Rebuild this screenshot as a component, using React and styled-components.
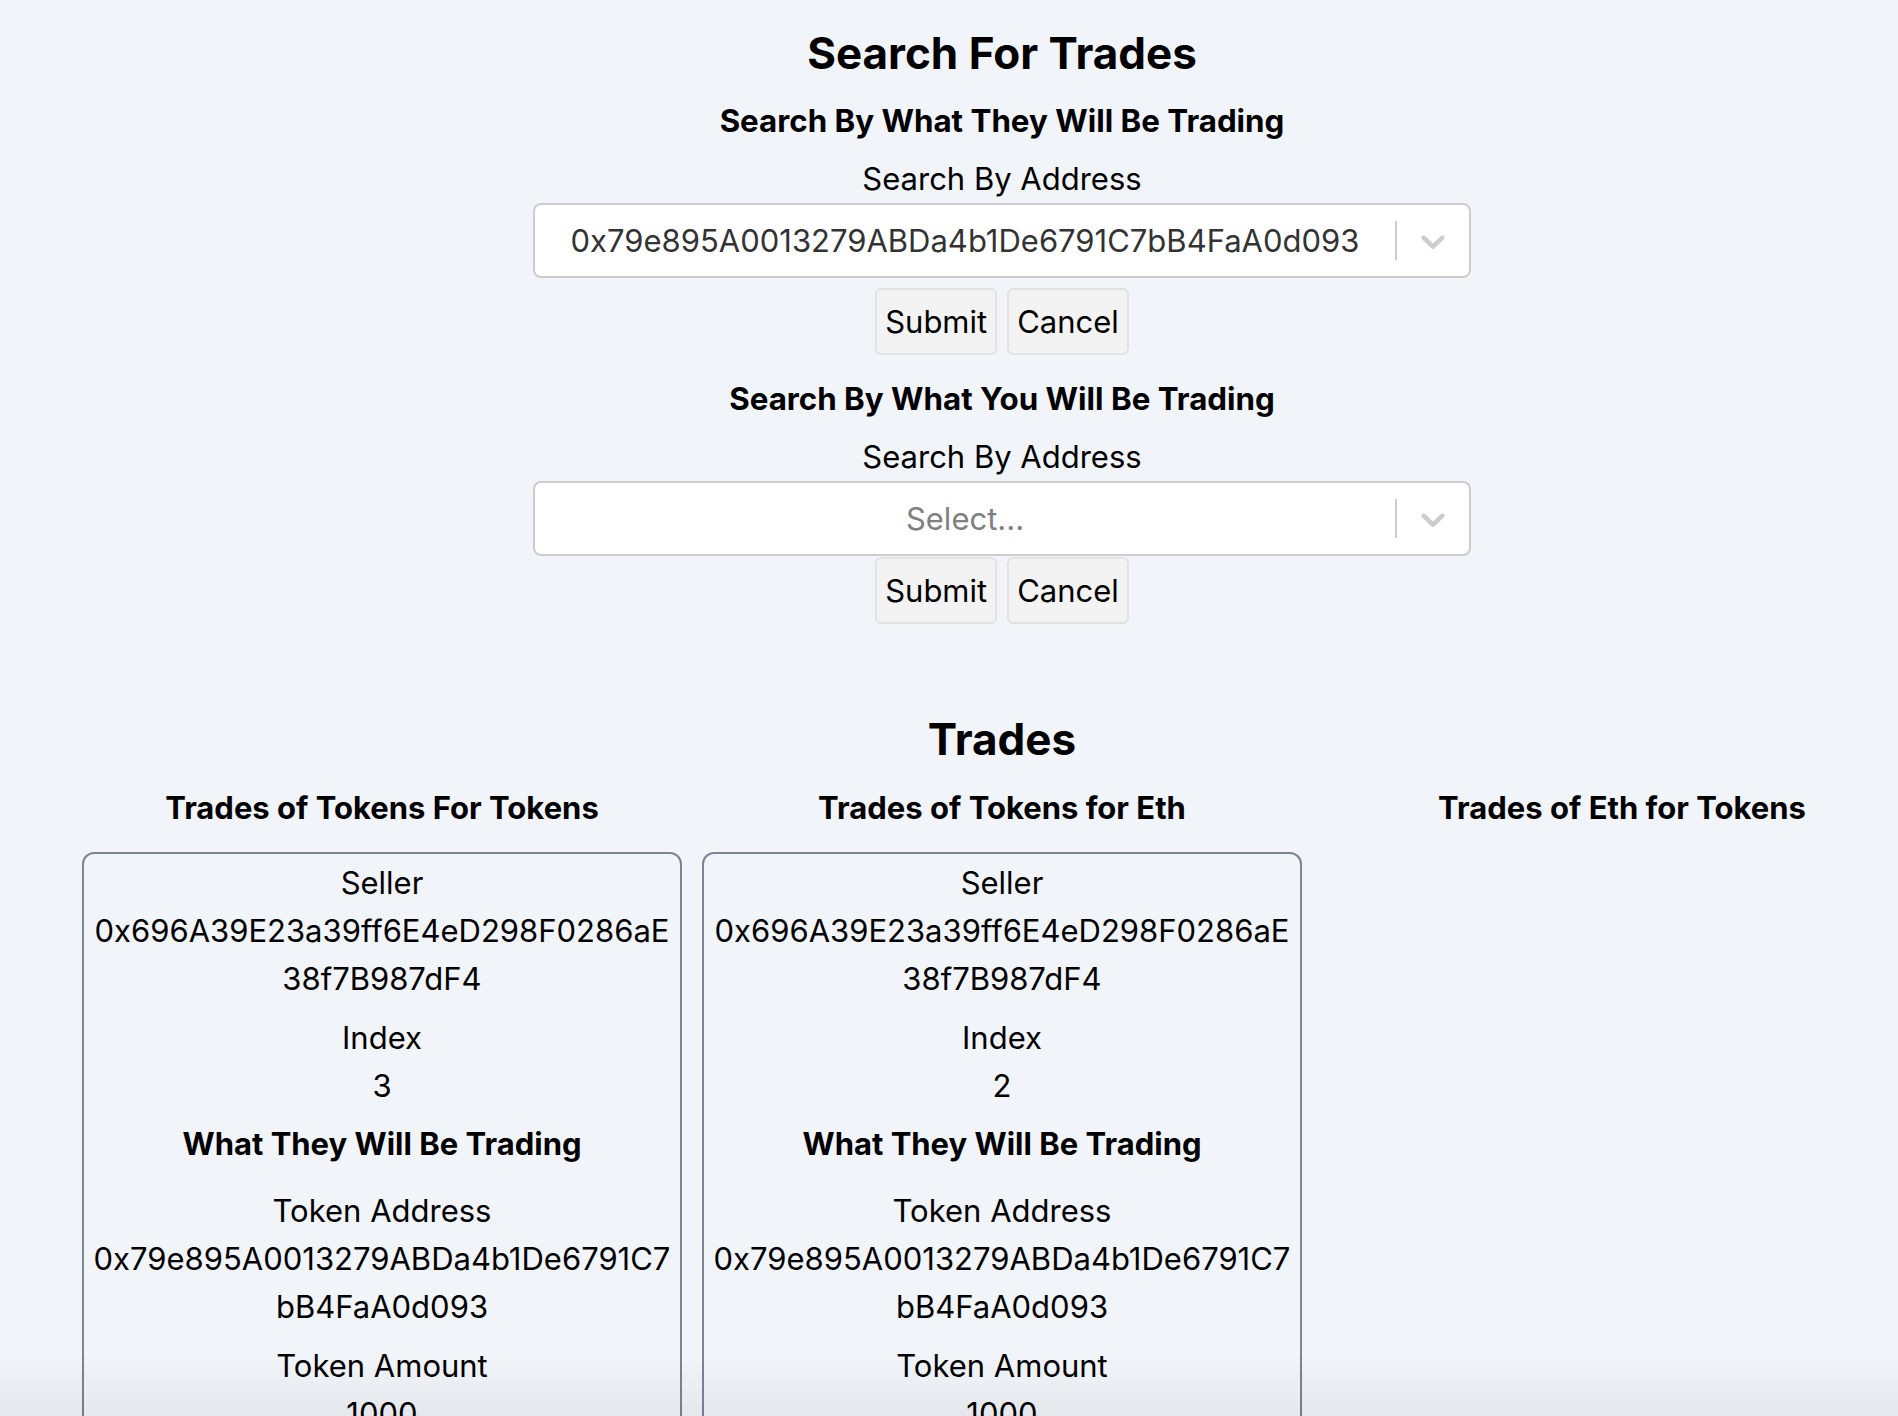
import React from 'react';
import styled, { createGlobalStyle } from 'styled-components';

const SELLER = '0x696A39E23a39ff6E4eD298F0286aE38f7B987dF4';
const TOKEN = '0x79e895A0013279ABDa4b1De6791C7bB4FaA0d093';

const columns = [
  {
    title: 'Trades of Tokens For Tokens',
    trades: [
      {
        seller: SELLER,
        index: 3,
        they: [
          ['Token Address', TOKEN],
          ['Token Amount', '1000']
        ],
        you: [
          ['Token Address', TOKEN],
          ['Token Amount', '500']
        ]
      }
    ]
  },
  {
    title: 'Trades of Tokens for Eth',
    trades: [
      {
        seller: SELLER,
        index: 2,
        they: [
          ['Token Address', TOKEN],
          ['Token Amount', '1000']
        ],
        you: [['Eth Amount', '1']]
      }
    ]
  },
  {
    title: 'Trades of Eth for Tokens',
    trades: []
  }
];

function Chevron() {
  return (
    <svg width="40" height="40" viewBox="0 0 20 20" fill="currentColor" aria-hidden="true">
      <path d="M4.516 7.548c0.436-0.446 1.043-0.481 1.576 0l3.908 3.747 3.908-3.747c0.533-0.481 1.141-0.446 1.574 0 0.436 0.445 0.408 1.197 0 1.615-0.406 0.418-4.695 4.502-4.695 4.502-0.217 0.223-0.502 0.335-0.787 0.335s-0.57-0.112-0.789-0.335c0 0-4.287-4.084-4.695-4.502s-0.436-1.170 0-1.615z" />
    </svg>
  );
}

function AddressSelect({ value }) {
  return (
    <SelectBox>
      <ValueArea $placeholder={!value}>{value || 'Select...'}</ValueArea>
      <Separator />
      <Indicator>
        <Chevron />
      </Indicator>
    </SelectBox>
  );
}

function SearchBlock({ title, value, titleTop, buttonGap }) {
  return (
    <>
      <SubTitle $top={titleTop}>{title}</SubTitle>
      <Label>Search By Address</Label>
      <AddressSelect value={value} />
      <ButtonRow $top={buttonGap}>
        <Button>Submit</Button>
        <Button>Cancel</Button>
      </ButtonRow>
    </>
  );
}

function TradeCard({ trade }) {
  return (
    <Card>
      <Field $first>
        <div>Seller</div>
        <Value>{trade.seller}</Value>
      </Field>
      <Field>
        <div>Index</div>
        <Value>{trade.index}</Value>
      </Field>
      <CardHeading>What They Will Be Trading</CardHeading>
      {trade.they.map(([label, value], i) => (
        <Field key={label} $first={i === 0}>
          <div>{label}</div>
          <Value>{value}</Value>
        </Field>
      ))}
      <CardHeading>What You Will Be Trading</CardHeading>
      {trade.you.map(([label, value], i) => (
        <Field key={label} $first={i === 0}>
          <div>{label}</div>
          <Value>{value}</Value>
        </Field>
      ))}
    </Card>
  );
}

export default function App() {
  return (
    <>
      <GlobalStyle />
      <Page>
        <PageTitle>Search For Trades</PageTitle>
        <SearchBlock
          title="Search By What They Will Be Trading"
          value={TOKEN}
          titleTop={20}
          buttonGap={10}
        />
        <SearchBlock
          title="Search By What You Will Be Trading"
          value=""
          titleTop={24}
          buttonGap={1}
        />

        <SectionTitle>Trades</SectionTitle>
        <Columns>
          {columns.map((col) => (
            <Column key={col.title}>
              <ColumnTitle>{col.title}</ColumnTitle>
              {col.trades.map((t) => (
                <TradeCard key={t.index} trade={t} />
              ))}
            </Column>
          ))}
        </Columns>
      </Page>
      <BottomFade />
    </>
  );
}

// 전역
const GlobalStyle = createGlobalStyle`
  html, body {
    margin: 0;
    padding: 0;
    background: #f1f4f9;
    overflow: hidden;
  }
  body {
    font-family: Inter, "Noto Sans", sans-serif;
    color: #000;
  }
  ::-webkit-scrollbar { display: none; }
`;

const Page = styled.div`
  width: 1860px;
  margin-left: 72px;
  display: flex;
  flex-direction: column;
  align-items: center;
  text-align: center;
  font-size: 31px;
  line-height: 48px;
`;

const PageTitle = styled.h1`
  margin: 25px 0 0;
  font-size: 44px;
  line-height: 56px;
  font-weight: 700;
`;

const SubTitle = styled.h2`
  margin: ${(p) => p.$top}px 0 0;
  font-size: 31.3px;
  line-height: 40px;
  font-weight: 700;
`;

const Label = styled.div`
  margin-top: 14px;
`;

// 셀렉트 박스
const SelectBox = styled.div`
  box-sizing: border-box;
  width: 938px;
  height: 75px;
  display: flex;
  align-items: stretch;
  background: #fff;
  border: 2px solid #cccccc;
  border-radius: 8px;
`;

const ValueArea = styled.div`
  flex: 1;
  display: flex;
  align-items: center;
  justify-content: center;
  padding: 4px 16px;
  color: ${(p) => (p.$placeholder ? '#808080' : '#333333')};
  white-space: nowrap;
  overflow: hidden;
`;

const Separator = styled.span`
  width: 2px;
  margin: 16px 0;
  background: #cccccc;
`;

const Indicator = styled.div`
  display: flex;
  align-items: center;
  padding: 0 16px;
  color: #cccccc;
`;

const ButtonRow = styled.div`
  margin-top: ${(p) => p.$top}px;
  display: flex;
  gap: 10px;
`;

const Button = styled.button`
  box-sizing: border-box;
  height: 67px;
  padding: 0 8px;
  font-family: inherit;
  font-size: 31px;
  color: #000;
  background: #f3f3f3;
  border: 2px solid #e2e2e2;
  border-radius: 6px;
`;

// 트레이드 목록
const SectionTitle = styled.h1`
  margin: 87px 0 0;
  font-size: 44px;
  line-height: 56px;
  font-weight: 700;
`;

const Columns = styled.div`
  margin-top: 21px;
  display: grid;
  grid-template-columns: repeat(3, 620px);
`;

const Column = styled.div`
  display: flex;
  flex-direction: column;
  align-items: center;
`;

const ColumnTitle = styled.h3`
  margin: 0;
  font-size: 31px;
  line-height: 40px;
  font-weight: 700;
`;

const Card = styled.div`
  box-sizing: border-box;
  width: 600px;
  margin-top: 24px;
  padding: 5px 4px 20px;
  border: 2px solid #7a8495;
  border-radius: 12px;
`;

const Field = styled.div`
  margin-top: ${(p) => (p.$first ? 0 : 11)}px;
`;

const Value = styled.div`
  word-break: break-all;
`;

const CardHeading = styled.div`
  margin: 14px 0 23px;
  font-weight: 700;
  line-height: 40px;
`;

const BottomFade = styled.div`
  position: fixed;
  left: 0;
  right: 0;
  bottom: 0;
  height: 60px;
  pointer-events: none;
  background: linear-gradient(to bottom, rgba(0, 0, 0, 0), rgba(0, 0, 0, 0.05));
`;
